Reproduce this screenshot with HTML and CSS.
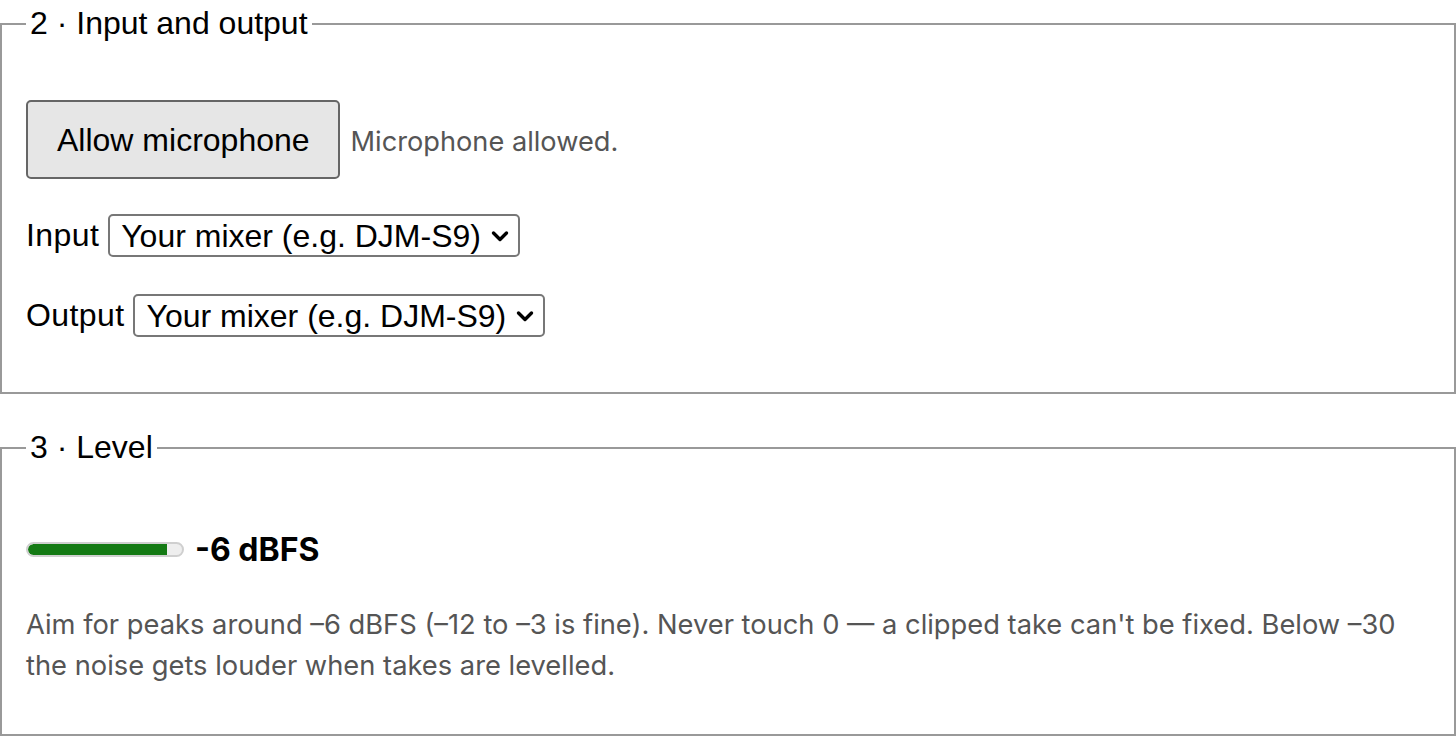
FILE: index.html
```html
<!DOCTYPE html>
<html lang="en">
<head>
  <meta charset="UTF-8" />
  <meta name="viewport" content="width=device-width, initial-scale=1.0"/>
  <title>Recording setup</title>
  <link rel="stylesheet" href="styles.css">
</head>
<body>
  <fieldset class="step step-io">
    <legend>2 · Input and output</legend>

    <div class="row row-mic">
      <button class="btn" id="allow-mic">Allow microphone</button>
      <span class="note" id="mic-status">Microphone allowed.</span>
    </div>

    <div class="row row-device">
      <label for="input-dev">Input</label>
      <span class="select-wrap">
        <select id="input-dev">
          <option>Your mixer (e.g. DJM-S9)</option>
        </select>
        <svg class="chevron" viewBox="0 0 20 14" width="20" height="14" aria-hidden="true">
          <path d="M3.5 4 L10 10.5 L16.5 4" fill="none" stroke="#000" stroke-width="3.4" stroke-linecap="round" stroke-linejoin="round"/>
        </svg>
      </span>
    </div>

    <div class="row row-device">
      <label for="output-dev">Output</label>
      <span class="select-wrap">
        <select id="output-dev">
          <option>Your mixer (e.g. DJM-S9)</option>
        </select>
        <svg class="chevron" viewBox="0 0 20 14" width="20" height="14" aria-hidden="true">
          <path d="M3.5 4 L10 10.5 L16.5 4" fill="none" stroke="#000" stroke-width="3.4" stroke-linecap="round" stroke-linejoin="round"/>
        </svg>
      </span>
    </div>
  </fieldset>

  <fieldset class="step step-level">
    <legend>3 · Level</legend>

    <div class="row row-meter">
      <div class="meter"><div class="meter-fill" style="width: 90%"></div></div>
      <strong class="level-readout" id="level">-6 dBFS</strong>
    </div>

    <p class="help">Aim for peaks around –6 dBFS (–12 to –3 is fine). Never touch 0 — a clipped take can't be fixed. Below –30 the noise gets louder when takes are levelled.</p>
  </fieldset>
</body>
</html>
```

FILE: styles.css
```css
body {
  margin: 0;
  font-family: 'Liberation Sans', Arial, sans-serif;
  font-size: 32px;
  color: #000;
  background: #fff;
}

.step {
  margin: 5px 0 0;
  border: 2px solid #999;
  padding: 0 24px;
  min-width: 0;
}

.step legend {
  padding: 0 4px;
  font-size: 32px;
}

.step-io {
  padding-top: 58px;
  padding-bottom: 55px;
}

.step-level {
  margin-top: 35px;
  padding-top: 64px;
  padding-bottom: 48px;
}

.row {
  display: flex;
  align-items: center;
}

.row-device {
  margin-top: 35px;
}

.row-device + .row-device {
  margin-top: 37px;
}

.row-device label {
  margin-right: 9px;
  letter-spacing: 0.4px;
}

.btn {
  font-family: 'Liberation Sans', Arial, sans-serif;
  font-size: 32px;
  color: #000;
  background: #e6e6e6;
  border: 2px solid #666;
  border-radius: 5px;
  height: 79px;
  padding: 2px 28px 0 29px;
  cursor: pointer;
}

.note {
  margin-left: 11px;
  padding-top: 4px;
  font-family: Inter, 'Noto Sans', sans-serif;
  font-size: 27.2px;
  color: #555;
}

.select-wrap {
  display: inline-flex;
  align-items: center;
  height: 43px;
  box-sizing: border-box;
  border: 2px solid #777;
  border-radius: 5px;
  padding: 0 8px 0 0;
  background: #fff;
}

.select-wrap select {
  appearance: none;
  -webkit-appearance: none;
  border: none;
  background: transparent;
  font-family: 'Liberation Sans', Arial, sans-serif;
  font-size: 32px;
  color: #000;
  padding: 0 9px 0 11px;
  margin: 0;
  outline: none;
}

.chevron {
  display: block;
  pointer-events: none;
}

.row-meter {
  height: 39px;
}

.meter {
  width: 158px;
  height: 15px;
  box-sizing: border-box;
  border: 2px solid #cfcfcf;
  border-radius: 8px;
  background: #eee;
  overflow: hidden;
}

.meter-fill {
  height: 100%;
  background: #147a14;
  border-radius: 6px 0 0 6px;
}

.level-readout {
  margin-left: 11px;
  font-family: Inter, 'Noto Sans', sans-serif;
  font-size: 32px;
  font-weight: 700;
}

.help {
  margin: 36px 0 0;
  font-family: Inter, 'Noto Sans', sans-serif;
  font-size: 27.3px;
  line-height: 40.6px;
  color: #555;
}
```
